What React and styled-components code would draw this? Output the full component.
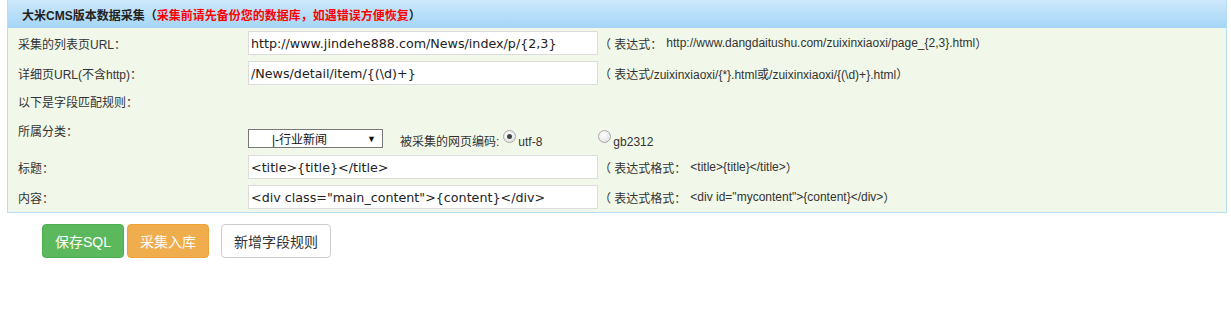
import React from 'react'
import styled, { createGlobalStyle } from 'styled-components'

const GlobalStyle = createGlobalStyle`
    body {
        margin: 0;
        background: #fff;
        font-family: Arial, "Liberation Sans", "Noto Sans CJK SC", sans-serif;
        font-size: 12px;
        color: #333;
    }
`

const Page = styled.div`
    padding: 0 4px 0 7px;
`

const Panel = styled.div`
    border: 1px solid #b7ddf4;
    border-top: none;
    background: #f1f8e9;
`

const PanelHeader = styled.div`
    height: 28px;
    display: flex;
    align-items: center;
    padding-left: 14px;
    background: linear-gradient(#cde8fb, #a4d6f7);
    font-weight: bold;
    font-size: 12px;
    color: #222;
`

const Warn = styled.span`
    color: #ff0000;
`

const Form = styled.div`
    display: grid;
    grid-template-columns: 240px 356px 1fr;
`

const Label = styled.div`
    display: flex;
    align-items: ${p => (p.top ? 'flex-start' : 'center')};
    padding-left: 10px;
    height: ${p => p.h || 30}px;
    padding-top: ${p => (p.top ? 7 : 0)}px;
    box-sizing: border-box;
    font-size: 12px;
    color: #333;
    grid-column: ${p => (p.wide ? '1 / 4' : 'auto')};
`

const Cell = styled.div`
    display: flex;
    align-items: center;
    height: 30px;
`

const OptionCell = styled.div`
    grid-column: 2 / 4;
    display: flex;
    align-items: flex-end;
    height: 37px;
    padding-bottom: 3px;
    box-sizing: border-box;
    white-space: nowrap;
`

const Input = styled.input`
    width: 350px;
    height: 24px;
    box-sizing: border-box;
    border: 1px solid #dcdcdc;
    background: #fff;
    padding: 0 2px;
    font-family: "DejaVu Sans", Verdana, sans-serif;
    font-size: 12.7px;
    color: #222;
    outline: none;
`

const Hint = styled.div`
    display: flex;
    align-items: center;
    height: 30px;
    margin-left: -5px;
    font-size: 12px;
    color: #333;
    white-space: nowrap;
`

const Example = styled.span`
    font-size: 12px;
    color: #333;
    margin-left: ${p => p.gap || 0}px;
`

const Select = styled.div`
    width: 135px;
    height: 19px;
    box-sizing: border-box;
    border: 1px solid #777;
    background: #fff;
    display: flex;
    align-items: center;
    padding: 0 6px 0 23px;
    font-size: 12px;
    color: #111;
    margin-bottom: 1px;
`

const SelectText = styled.span`
    flex: 1;
`

const Arrow = styled.span`
    font-size: 9px;
    color: #111;
`

const Encoding = styled.div`
    display: flex;
    align-items: flex-end;
    margin-left: 17px;
    font-size: 12px;
    color: #333;
`

const Radio = styled.span`
    display: inline-block;
    flex-shrink: 0;
    width: 11px;
    height: 11px;
    border-radius: 50%;
    border: 1px solid #a8a8a8;
    background: radial-gradient(circle at 40% 35%, #fff, #dcdcdc);
    margin: 0 2px 6px ${p => p.ml || 0}px;
    position: relative;
    &::after {
        content: '';
        display: ${p => (p.checked ? 'block' : 'none')};
        position: absolute;
        left: 3px;
        top: 3px;
        width: 5px;
        height: 5px;
        border-radius: 50%;
        background: #444;
    }
`

const Buttons = styled.div`
    display: flex;
    padding: 11px 0 0 35px;
`

const Button = styled.button`
    height: 34px;
    padding: 0 ${p => p.px || 12}px;
    margin-right: ${p => p.mr || 3}px;
    border-radius: 4px;
    font-family: Arial, "Liberation Sans", "Noto Sans CJK SC", sans-serif;
    font-size: 14px;
    cursor: pointer;
    border: 1px solid ${p => p.border};
    background: ${p => p.bg};
    color: ${p => p.fg};
`

const App = () => {
    return (
        <Page>
            <GlobalStyle />
            <Panel>
                <PanelHeader>
                    大米CMS版本数据采集（<Warn>采集前请先备份您的数据库，如遇错误方便恢复</Warn>）
                </PanelHeader>
                <Form>
                    <Label>采集的列表页URL：</Label>
                    <Cell><Input defaultValue="http://www.jindehe888.com/News/index/p/{2,3}" /></Cell>
                    <Hint>（ 表达式：<Example gap={4}>http://www.dangdaitushu.com/zuixinxiaoxi/page_{'{2,3}'}.html</Example>）</Hint>

                    <Label>详细页URL(不含http)：</Label>
                    <Cell><Input defaultValue="/News/detail/item/{(\d)+}" /></Cell>
                    <Hint>（ 表达式<Example>/zuixinxiaoxi/{'{*}'}.html或/zuixinxiaoxi/{'{(\\d)+}'}.html</Example>）</Hint>

                    <Label wide h={27}>以下是字段匹配规则：</Label>

                    <Label top h={37}>所属分类：</Label>
                    <OptionCell>
                        <Select>
                            <SelectText>|-行业新闻</SelectText>
                            <Arrow>▼</Arrow>
                        </Select>
                        <Encoding>
                            被采集的网页编码:
                            <Radio checked ml={4} />utf-8
                            <Radio ml={56} />gb2312
                        </Encoding>
                    </OptionCell>

                    <Label>标题：</Label>
                    <Cell><Input defaultValue="<title>{title}</title>" /></Cell>
                    <Hint>（ 表达式格式：<Example gap={4}>&lt;title&gt;{'{title}'}&lt;/title&gt;</Example>）</Hint>

                    <Label>内容：</Label>
                    <Cell><Input defaultValue={'<div class="main_content">{content}</div>'} /></Cell>
                    <Hint>（ 表达式格式：<Example gap={4}>&lt;div id="mycontent"&gt;{'{content}'}&lt;/div&gt;</Example>）</Hint>
                </Form>
            </Panel>
            <Buttons>
                <Button bg="#5cb85c" border="#4cae4c" fg="#fff">保存SQL</Button>
                <Button bg="#f0ad4e" border="#eea236" fg="#fff" mr={12}>采集入库</Button>
                <Button bg="#fff" border="#ccc" fg="#333">新增字段规则</Button>
            </Buttons>
        </Page>
    )
}

export default App
